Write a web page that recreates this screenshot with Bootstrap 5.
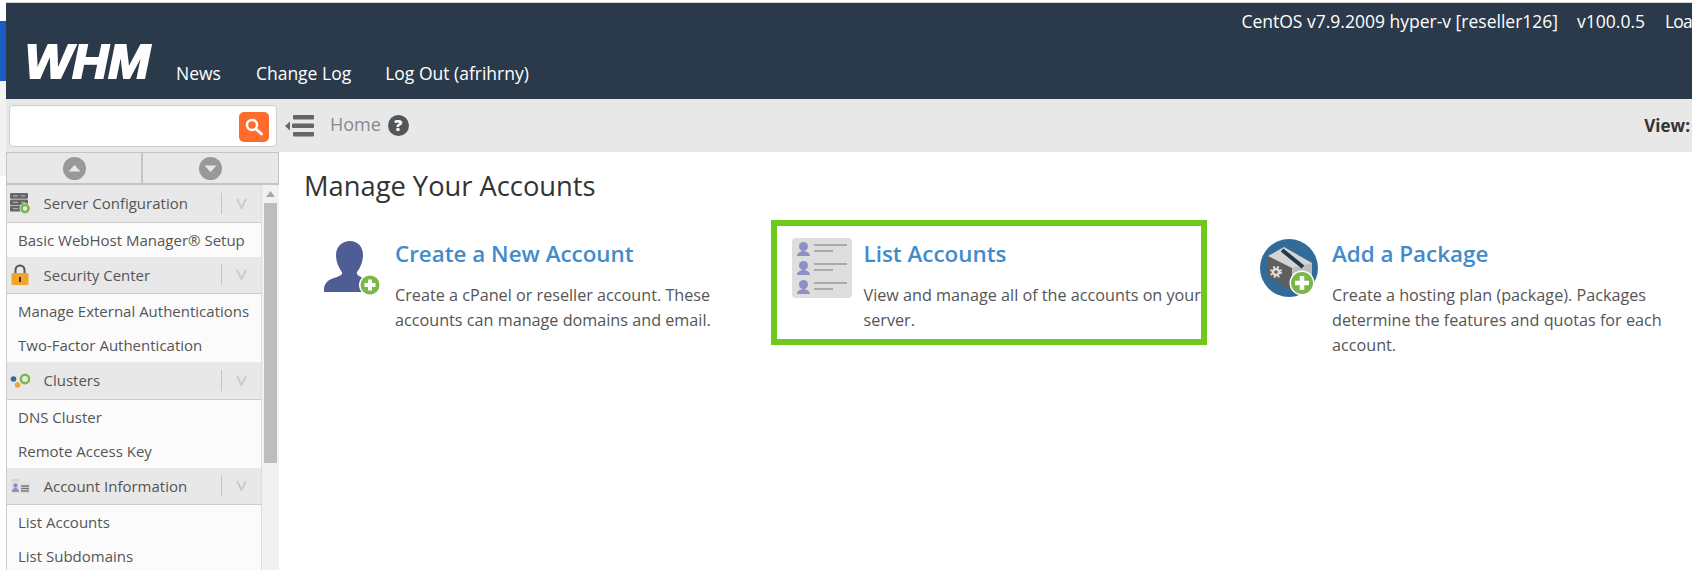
<!DOCTYPE html>
<html lang="en">
<head>
<meta charset="utf-8">
<title>WHM</title>
<link href="https://cdn.jsdelivr.net/npm/bootstrap@5.3.0/dist/css/bootstrap.min.css" rel="stylesheet">
<style>
html,body{height:570px;overflow:hidden;background:#fff}
body{font-family:"Open Sans",sans-serif;color:#555;font-size:14px}
a{text-decoration:none}
.edge-strip{width:6px;flex:none;height:570px;background:#fff}
.edge-top{height:21px}
.edge-blue{height:60px;background:#1a5cc4}
.edge-grey{height:95px;background:#f3f2f0}
.shell{flex:1 1 auto;min-width:0;height:570px;padding-top:2px;overflow:hidden;position:relative}
.whm-head{height:97px;background:#2b3a4b;border-top:1px solid #d8d8d8;color:#fff;font-size:17.5px}
.status-row{height:37px;padding-top:6px;line-height:24px}
.status-row span{white-space:nowrap}
.status-load{flex:none;letter-spacing:-.8px}
.status-a{margin-right:19px}
.status-b{margin-right:20px}
.nav-row{height:59px}
.logo-svg{width:130px;height:56px;margin-left:16px;margin-top:-6px;flex:none}
.top-link{color:#fff;line-height:24px;margin-top:21px}
.top-link:hover{color:#fff}
.link-news{margin-left:24px}
.link-change{margin-left:35px}
.link-out{margin-left:34px}
.tool-bar{height:53px;background:#e8e8e8}
.search-box{width:268px;height:42px;margin-left:3px;background:#fff;border:1px solid #ccc;border-radius:4px;padding:6px 7px 0 0;flex:none}
.search-btn{width:30px;height:30px;background:#ff6c2c;border-radius:5px;border:0;padding:0;display:flex;align-items:center;justify-content:center}
.toggle-icon{margin-left:8px;flex:none}
.crumb{font-size:18px;color:#888;margin-left:16px;line-height:24px;padding-bottom:4px}
.help-dot{width:21px;height:21px;margin-left:7px;flex:none;background:#555;color:#fff;font-size:16px;font-weight:800;line-height:21px;text-align:center}
.view-lbl{font-size:17px;font-weight:700;color:#333;margin-right:2px;white-space:nowrap}
.content-row{height:418px}
.side-col{width:273px;flex:none;height:418px;overflow:hidden}
.pager-row{height:33px;background:#e8e8e8;border-style:solid;border-width:1px 1px 2px 1px;border-color:#c4c4c4}
.pager-cell{display:flex;align-items:center;justify-content:center}
.pager-left{width:136px;border-right:2px solid #c4c4c4}
.pager-right{flex:1}
.list-wrap{height:385px}
.tree-col{width:256px;flex:none;border-left:1px solid #ccc;border-right:1px solid #ddd;background:#fbfbfb;overflow:hidden}
.tree-head{height:37.5px;background:#e8e8e8;border-bottom:1px solid #ccc;color:#555;padding-left:34px;font-size:15px;white-space:nowrap}
.tree-icon{width:20px;height:22px;margin-left:-31px;margin-right:13.5px;flex:none}
.tree-sep{width:1px;height:21px;background:#c4c4c4;margin-left:auto;margin-right:14px}
.tree-chev{margin-right:14.5px;flex:none}
.tree-item{height:34px;line-height:34px;padding-left:11px;font-size:15px;color:#555;white-space:nowrap}
.scroll-track{width:17px;flex:none;background:#f1f1f1;padding:6px 2px 0}
.scroll-arrow{display:block;margin:0 auto 6px}
.scroll-thumb{height:260px;background:#bdbdbd}
.main-col{flex:1 1 auto;min-width:0;padding:16px 0 0 25px;overflow:hidden}
.page-title{font-size:27.3px;font-weight:400;color:#333;line-height:36px;margin:0}
.tile-row{margin-top:32px}
.tile{width:468.5px;flex:none;padding-left:19px}
.tile-img{width:72px;flex:none}
.img-user{padding:5px 0 0 1px}
.img-list{padding-top:2px}
.img-pack{padding-top:3px}
.tile-name{font-size:22.4px;font-weight:600;color:#428bca;line-height:32px;padding-top:2px;margin:0 0 13px;display:block}
.tile-text{width:345px;font-size:16.2px;line-height:25px;color:#555;margin:0}
.hilite{position:absolute;left:765px;top:220px;width:436px;height:125px;border:6px solid #6fc81e;pointer-events:none}
</style>
</head>
<body>
<div class="d-flex">
  <div class="edge-strip">
    <div class="edge-top"></div><div class="edge-blue"></div><div class="edge-grey"></div>
  </div>
  <div class="shell">
    <header class="whm-head">
      <div class="status-row d-flex justify-content-end">
        <span class="status-a">CentOS v7.9.2009 hyper-v [reseller126]</span>
        <span class="status-b">v100.0.5</span>
        <span class="status-load">Loa</span>
      </div>
      <div class="nav-row d-flex align-items-start">
        <svg class="logo-svg" viewBox="0 0 130 56" aria-label="WHM"><text x="3" y="44" textLength="125" lengthAdjust="spacingAndGlyphs" font-family="Liberation Sans" font-weight="700" font-style="italic" font-size="48" fill="#fff" stroke="#fff" stroke-width="2">WHM</text></svg>
        <a class="top-link link-news" href="#">News</a>
        <a class="top-link link-change" href="#">Change Log</a>
        <a class="top-link link-out" href="#">Log Out (afrihrny)</a>
      </div>
    </header>
    <div class="tool-bar d-flex align-items-center">
      <div class="search-box d-flex justify-content-end">
        <button class="search-btn" type="button" aria-label="Search">
          <svg width="20" height="20" viewBox="0 0 20 20"><circle cx="8" cy="8" r="5" fill="none" stroke="#fff" stroke-width="2.400"/><path d="M12 12l5.500 5" stroke="#fff" stroke-width="3" stroke-linecap="round"/></svg>
        </button>
      </div>
      <svg class="toggle-icon" width="29" height="22" viewBox="0 0 29 22"><path d="M0 11l5-4.500v9z" fill="#666"/><rect x="8" y="0" width="21" height="4.500" rx="1" fill="#666"/><rect x="7" y="8.500" width="22" height="4.500" rx="1" fill="#666"/><rect x="8" y="17" width="21" height="4.500" rx="1" fill="#666"/></svg>
      <span class="crumb">Home</span>
      <span class="help-dot rounded-circle">?</span>
      <span class="view-lbl ms-auto">View:</span>
    </div>
    <div class="content-row d-flex">
      <aside class="side-col">
        <div class="pager-row d-flex">
          <div class="pager-cell pager-left"><svg width="23" height="23" viewBox="0 0 23 23"><circle cx="11.500" cy="11.500" r="11.500" fill="#999"/><path d="M5.500 14.500L11.500 8l6 6.500z" fill="#e8e8e8"/></svg></div>
          <div class="pager-cell pager-right"><svg width="23" height="23" viewBox="0 0 23 23"><circle cx="11.500" cy="11.500" r="11.500" fill="#999"/><path d="M5.500 8.500L11.500 15l6-6.500z" fill="#e8e8e8"/></svg></div>
        </div>
        <div class="list-wrap d-flex">
          <div class="tree-col">
            <div class="tree-head d-flex align-items-center">
              <svg class="tree-icon" viewBox="0 0 20 22"><rect x="0" y="1" width="18" height="5.800" rx="1" fill="#666"/><rect x="0" y="7.400" width="18" height="5.800" rx="1" fill="#666"/><rect x="0" y="13.800" width="18" height="5.800" rx="1" fill="#666"/><path d="M3 3.900h5M11 3.900h4M3 10.300h5M11 10.300h4M3 16.700h5" stroke="#bbb"/><circle cx="15" cy="16.500" r="5.500" fill="#e8e8e8"/><circle cx="15" cy="16.500" r="3.500" fill="none" stroke="#7ab648" stroke-width="2.600"/></svg>
              <span>Server Configuration</span>
              <span class="tree-sep"></span>
              <svg class="tree-chev" width="11" height="11" viewBox="0 0 11 11"><path d="M1 1l4.500 9L10 1" fill="none" stroke="#ccc" stroke-width="2"/></svg>
            </div>
            <div class="tree-item">Basic WebHost Manager® Setup</div>
            <div class="tree-head d-flex align-items-center">
              <svg class="tree-icon" viewBox="0 0 20 22"><path d="M5.500 10V6a4.500 4.500 0 0 1 9 0v4" fill="none" stroke="#555" stroke-width="2"/><rect x="1.500" y="9" width="17" height="12" rx="1.500" fill="#f0a52a"/><rect x="9" y="13" width="2" height="5" fill="#333"/></svg>
              <span>Security Center</span>
              <span class="tree-sep"></span>
              <svg class="tree-chev" width="11" height="11" viewBox="0 0 11 11"><path d="M1 1l4.500 9L10 1" fill="none" stroke="#ccc" stroke-width="2"/></svg>
            </div>
            <div class="tree-item">Manage External Authentications</div>
            <div class="tree-item">Two-Factor Authentication</div>
            <div class="tree-head d-flex align-items-center">
              <svg class="tree-icon" viewBox="0 0 20 22"><circle cx="3.500" cy="10" r="2.800" fill="#2e6b9e"/><circle cx="7.500" cy="16" r="2.800" fill="#f0a52a"/><circle cx="15" cy="10" r="4.200" fill="none" stroke="#7ab648" stroke-width="2.400"/></svg>
              <span>Clusters</span>
              <span class="tree-sep"></span>
              <svg class="tree-chev" width="11" height="11" viewBox="0 0 11 11"><path d="M1 1l4.500 9L10 1" fill="none" stroke="#ccc" stroke-width="2"/></svg>
            </div>
            <div class="tree-item">DNS Cluster</div>
            <div class="tree-item">Remote Access Key</div>
            <div class="tree-head d-flex align-items-center">
              <svg class="tree-icon" viewBox="0 0 20 22"><rect x="1" y="4" width="8" height="2" fill="#d4d4d4"/><rect x="1" y="6" width="19" height="13" fill="#e2e2e2"/><circle cx="5.500" cy="10.500" r="2.200" fill="#8d8fc5"/><path d="M2 17c0-3 1.500-4 3.500-4s3.500 1 3.500 4z" fill="#8d8fc5"/><path d="M11 11h8M11 13.500h8M11 16h8" stroke="#777" stroke-width="1.300"/></svg>
              <span>Account Information</span>
              <span class="tree-sep"></span>
              <svg class="tree-chev" width="11" height="11" viewBox="0 0 11 11"><path d="M1 1l4.500 9L10 1" fill="none" stroke="#ccc" stroke-width="2"/></svg>
            </div>
            <div class="tree-item">List Accounts</div>
            <div class="tree-item">List Subdomains</div>
          </div>
          <div class="scroll-track">
            <svg class="scroll-arrow" width="9" height="6" viewBox="0 0 9 6"><path d="M0 6l4.500-6L9 6z" fill="#aaa"/></svg>
            <div class="scroll-thumb"></div>
          </div>
        </div>
      </aside>
      <main class="main-col">
        <h1 class="page-title">Manage Your Accounts</h1>
        <div class="tile-row d-flex">
          <div class="tile d-flex">
            <div class="tile-img img-user">
              <svg width="58" height="56" viewBox="0 0 58 56"><path d="M26 0c7.500 0 13 5.500 13 14 0 7-3 13-6 17-1 3 2 4 6 6 6 3 8 5 8 13v1H0v-2c0-7 4-10 10-12 5-2 9-3 8-6-3-4-6-10-6-17C12 5.500 18.500 0 26 0z" fill="#4f5d95"/><circle cx="46" cy="44" r="11" fill="#fff"/><circle cx="46" cy="44" r="9.500" fill="#7ab648"/><path d="M46 38.500v11M40.500 44h11" stroke="#fff" stroke-width="4"/></svg>
            </div>
            <div>
              <a class="tile-name" href="#">Create a New Account</a>
              <p class="tile-text">Create a cPanel or reseller account. These accounts can manage domains and email.</p>
            </div>
          </div>
          <div class="tile d-flex">
            <div class="tile-img img-list">
              <svg width="60" height="60" viewBox="0 0 60 60"><rect width="60" height="60" rx="4" fill="#dedede"/><g fill="#8d8fc5"><circle cx="11.500" cy="8.500" r="4.500"/><path d="M5 18c0-4 4-4 6.500-5.500 2.500 1.500 6.500 1.500 6.500 5.500z"/><circle cx="11.500" cy="27.500" r="4.500"/><path d="M5 37c0-4 4-4 6.500-5.500 2.500 1.500 6.500 1.500 6.500 5.500z"/><circle cx="11.500" cy="46.500" r="4.500"/><path d="M5 56c0-4 4-4 6.500-5.500 2.500 1.500 6.500 1.500 6.500 5.500z"/></g><path d="M22 7h33M22 13h19M22 26h33M22 32h19M22 45h33M22 51h19" stroke="#999" stroke-width="1.500"/></svg>
            </div>
            <div>
              <a class="tile-name" href="#">List Accounts</a>
              <p class="tile-text">View and manage all of the accounts on your server.</p>
            </div>
          </div>
          <div class="tile d-flex">
            <div class="tile-img img-pack">
              <svg width="58" height="58" viewBox="0 0 58 58"><circle cx="29" cy="29" r="29" fill="#336b98"/><path d="M8 17l16-9 28 16v20L32 52z" fill="#d4d4d4"/><path d="M8 17l24 12v23L8 37z" fill="#5f5f5f"/><path d="M32 29l20-5v20L32 52z" fill="#bdbdbd"/><path d="M22 11l21 17" stroke="#23374d" stroke-width="4"/><circle cx="16" cy="33" r="3" fill="none" stroke="#ddd" stroke-width="2.400"/><circle cx="16" cy="33" r="5" fill="none" stroke="#ddd" stroke-width="2" stroke-dasharray="2 2"/><circle cx="42" cy="44" r="12.500" fill="#fff"/><circle cx="42" cy="44" r="11" fill="#7ab648"/><path d="M42 37v14M35 44h14" stroke="#fff" stroke-width="4.500"/></svg>
            </div>
            <div>
              <a class="tile-name" href="#">Add a Package</a>
              <p class="tile-text">Create a hosting plan (package). Packages determine the features and quotas for each account.</p>
            </div>
          </div>
        </div>
      </main>
    </div>
    <div class="hilite"></div>
  </div>
</div>
<script src="https://cdn.jsdelivr.net/npm/bootstrap@5.3.0/dist/js/bootstrap.bundle.min.js"></script>
</body>
</html>
